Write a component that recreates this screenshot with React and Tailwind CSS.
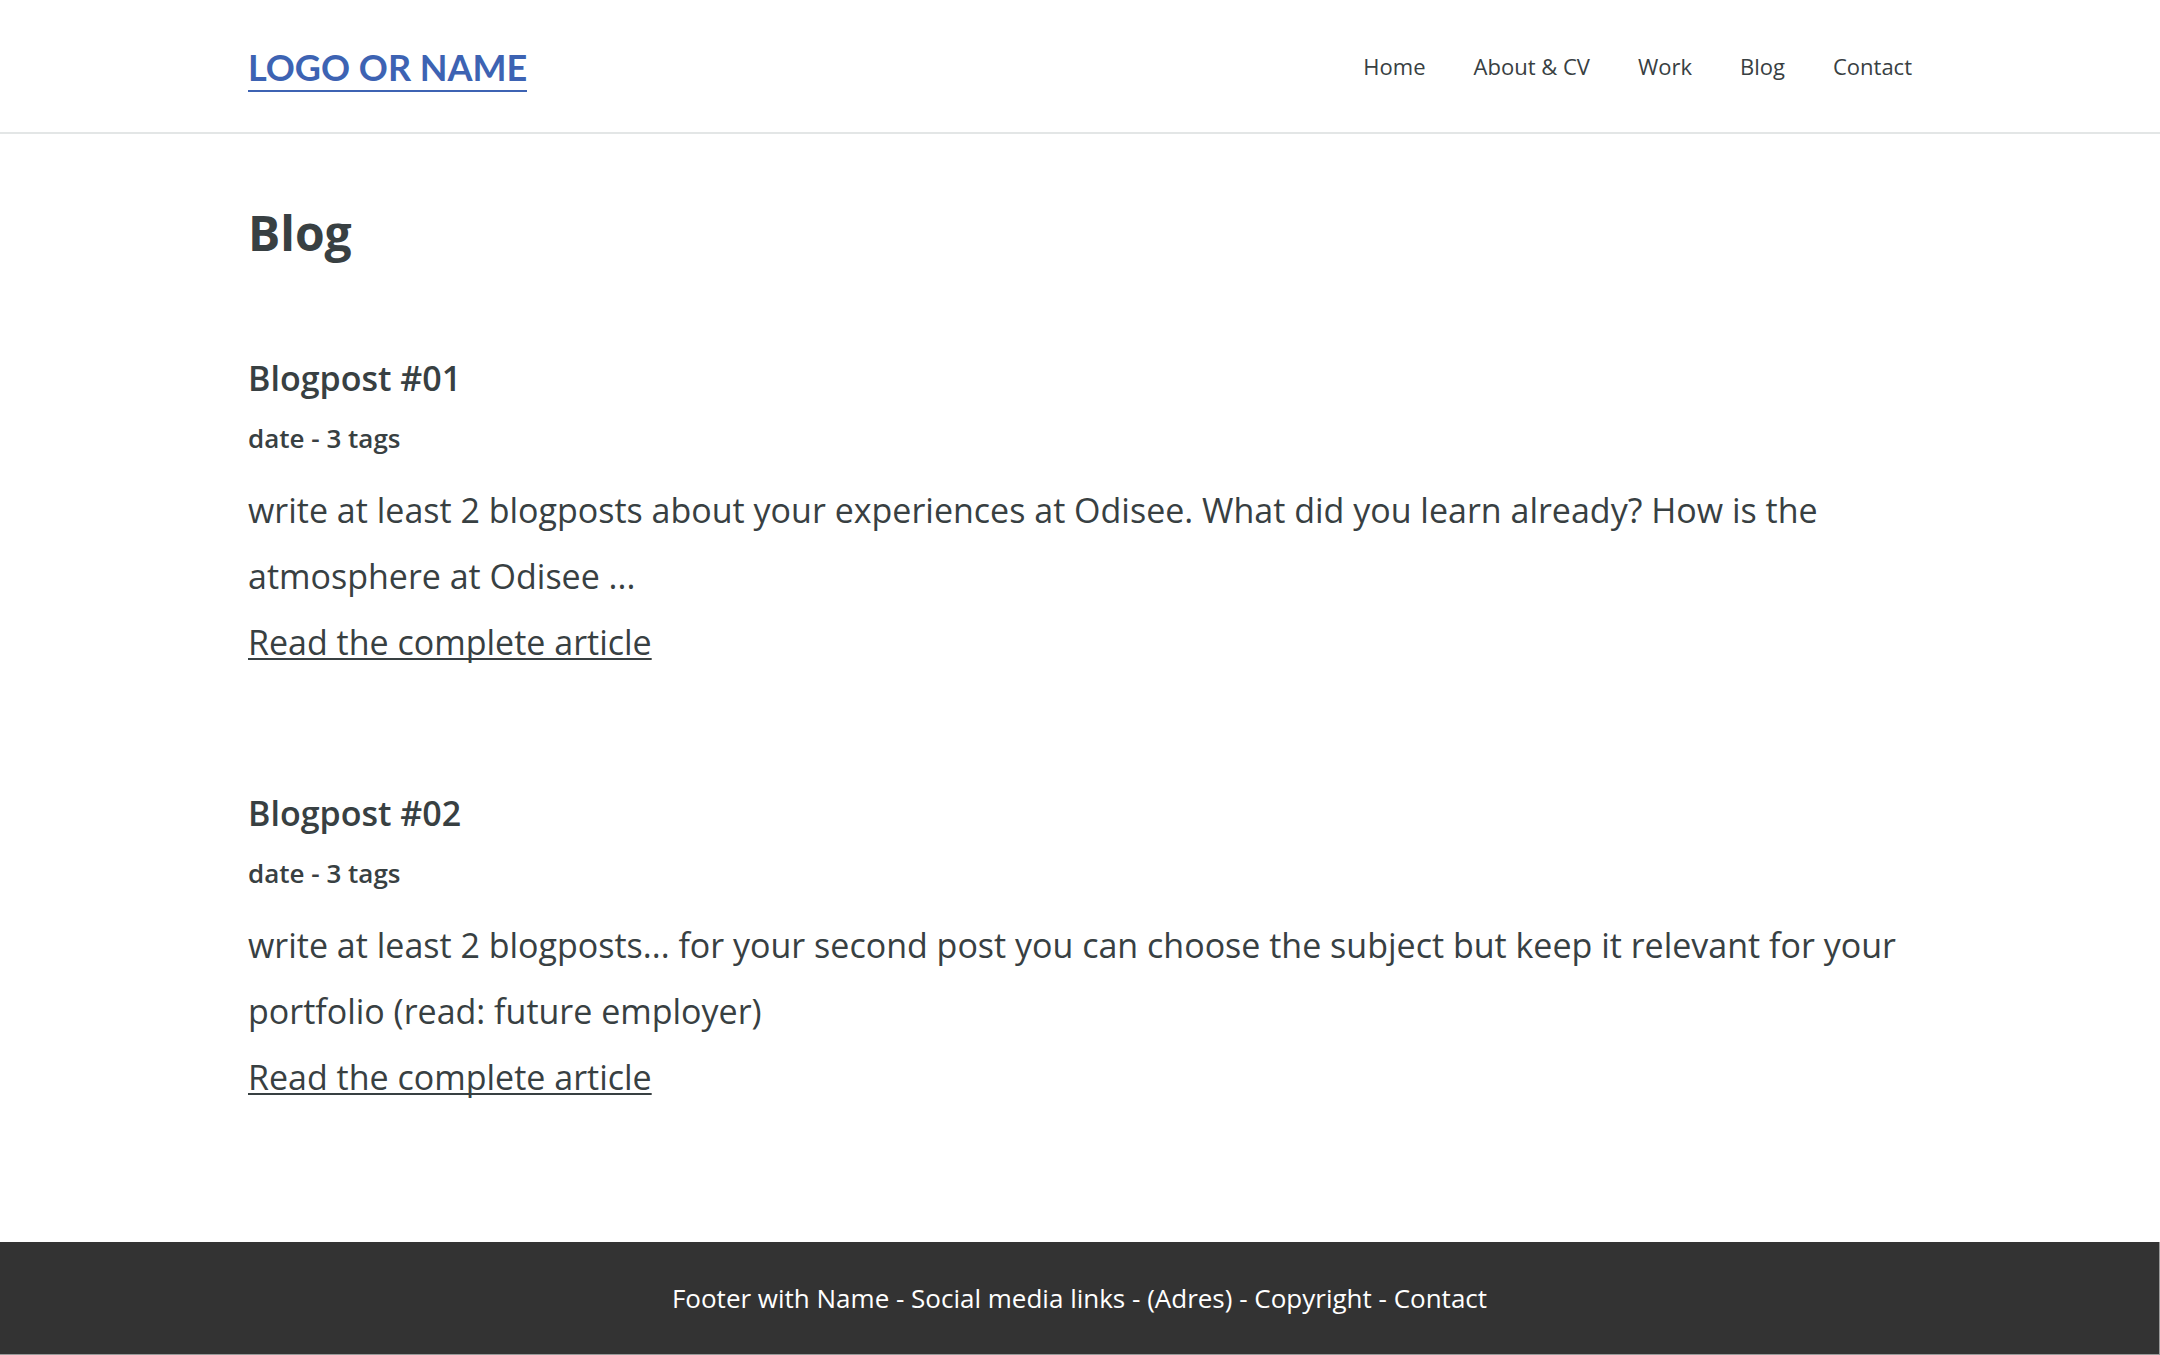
const nav = ['Home', 'About & CV', 'Work', 'Blog', 'Contact'];
const posts = [
  { title: 'Blogpost #01', text: 'write at least 2 blogposts about your experiences at Odisee. What did you learn already? How is the atmosphere at Odisee ...' },
  { title: 'Blogpost #02', text: 'write at least 2 blogposts... for your second post you can choose the subject but keep it relevant for your portfolio (read: future employer)' },
];

export default function App() {
  return (
    <div className="flex min-h-screen flex-col bg-white font-['Open_Sans',sans-serif] text-[#384042]">
      <header className="border-b-2 border-[#e3e6e6] py-10">
        <div className="mx-auto flex w-full max-w-[1664px] items-center justify-between">
          <a href="#" className="mt-1 border-b-2 border-[#3d63b3] font-['Lato',sans-serif] text-[36px] leading-[46px] font-bold text-[#3d63b3]">LOGO OR NAME</a>
          <nav className="flex gap-12 text-[22px] leading-[30px] font-medium">
            {nav.map((n) => <a key={n} href="#">{n}</a>)}
          </nav>
        </div>
      </header>
      <main className="mx-auto w-full max-w-[1664px] flex-1">
        <h1 className="mt-[66px] text-[48px] leading-[66px] font-bold">Blog</h1>
        <div className="mt-[90px] flex flex-col gap-[116px]">
          {posts.map((p) => (
            <article key={p.title}>
              <h2 className="text-[34px] leading-[44px] font-semibold">{p.title}</h2>
              <p className="mt-5 text-[26px] leading-[36px] font-semibold">date - 3 tags</p>
              <p className="mt-[21px] text-[34px] leading-[66px]">{p.text}</p>
              <a href="#" className="block w-fit text-[34px] leading-[66px] underline decoration-2 underline-offset-3 [text-decoration-skip-ink:none]">Read the complete article</a>
            </article>
          ))}
        </div>
      </main>
      <footer className="border-r border-b border-[#999] bg-[#333] py-10 text-center text-[26px] leading-[32px] text-white">
        <p>Footer with Name - Social media links - (Adres) - Copyright - Contact</p>
      </footer>
    </div>
  );
}
